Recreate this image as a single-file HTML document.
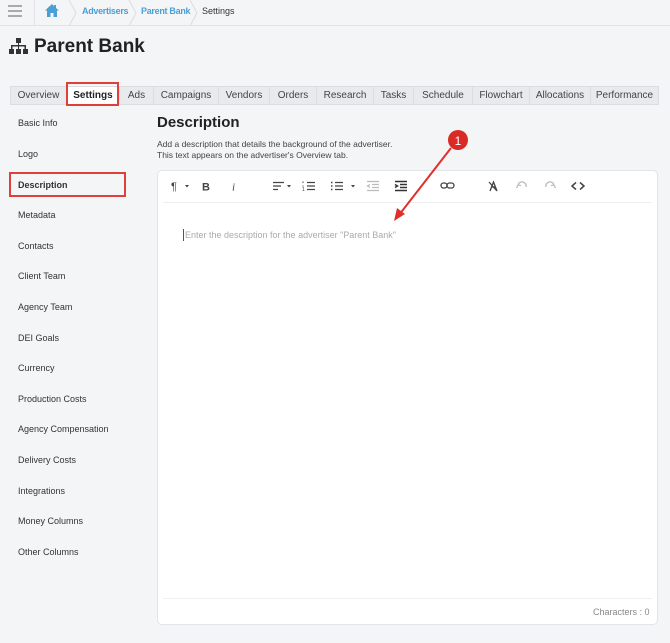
<!DOCTYPE html>
<html><head><meta charset="utf-8"><style>
*{box-sizing:border-box;margin:0;padding:0}
body{width:670px;height:643px;background:#f4f5f7;font-family:"Liberation Sans",Arial,sans-serif;color:#333;position:relative;overflow:hidden;font-size:9px}
.abs{position:absolute}
.top{left:0;top:0;width:670px;height:26px;background:#f4f5f7;border-bottom:1px solid #e2e3e6}
.bc{top:6px;font-size:9px}
.tabs{left:10px;top:86px;height:19px;display:flex}
.tab{height:19px;border:1px solid #dcdde0;border-right:none;background:#e9eaed;font-size:10px;color:#444;display:flex;align-items:center;justify-content:center}
.side div{position:absolute;left:18px;font-size:9px;color:#333}
.ic{position:absolute;top:179px}
</style></head><body>
<div class="abs top"></div>
<div class="abs" style="left:8px;top:5px;width:14px">
<div style="height:1.5px;background:#aaa;margin-bottom:3.5px"></div><div style="height:1.5px;background:#aaa;margin-bottom:3.5px"></div><div style="height:1.5px;background:#aaa"></div></div>
<div class="abs" style="left:34px;top:0;width:1px;height:26px;background:#e2e3e6"></div>
<svg class="abs" style="left:44px;top:3px" width="16" height="15" viewBox="0 0 16 15"><path d="M8 1L1 7.5h2V14h3.5V10h3v4H13V7.5h2L12 5V2h-2v1.2z" fill="#4a9fd5"/></svg>
<svg class="abs" style="left:68px;top:0" width="10" height="26"><path d="M1 0L8 13L1 26" stroke="#ddd" fill="none"/></svg>
<div class="abs bc" style="left:82px;color:#4a9fd5;font-weight:bold;letter-spacing:-0.3px">Advertisers</div>
<svg class="abs" style="left:128px;top:0" width="10" height="26"><path d="M1 0L8 13L1 26" stroke="#ddd" fill="none"/></svg>
<div class="abs bc" style="left:141px;color:#4a9fd5;font-weight:bold;letter-spacing:-0.3px">Parent Bank</div>
<svg class="abs" style="left:189px;top:0" width="10" height="26"><path d="M1 0L8 13L1 26" stroke="#ddd" fill="none"/></svg>
<div class="abs bc" style="left:202px;color:#333">Settings</div>
<svg class="abs" style="left:9px;top:38px" width="19" height="16" viewBox="0 0 19 16"><g fill="#333"><rect x="7" y="0" width="5" height="5"/><rect x="9" y="5" width="1" height="3"/><rect x="2" y="7" width="15" height="1.5"/><rect x="2" y="7" width="1.5" height="4"/><rect x="15.5" y="7" width="1.5" height="4"/><rect x="9" y="7" width="1" height="4"/><rect x="0" y="11" width="5" height="5"/><rect x="7" y="11" width="5" height="5"/><rect x="14" y="11" width="5" height="5"/></g></svg>
<div class="abs" style="left:34px;top:36px;font-size:19px;font-weight:bold;color:#222">Parent Bank</div>
<div class="abs tabs">
<div class="tab" style="width:56px">Overview</div>
<div class="tab" style="width:53px;background:#fff;font-weight:bold;color:#222">Settings</div>
<div class="tab" style="width:34px">Ads</div>
<div class="tab" style="width:65px">Campaigns</div>
<div class="tab" style="width:51px">Vendors</div>
<div class="tab" style="width:47px">Orders</div>
<div class="tab" style="width:57px">Research</div>
<div class="tab" style="width:40px">Tasks</div>
<div class="tab" style="width:59px">Schedule</div>
<div class="tab" style="width:57px">Flowchart</div>
<div class="tab" style="width:61px">Allocations</div>
<div class="tab" style="width:69px;border-right:1px solid #dcdde0">Performance</div>
</div>
<div class="abs" style="left:66px;top:82px;width:53px;height:24px;border:2px solid #e0403a"></div>
<div class="side">
<div style="top:118px">Basic Info</div><div style="top:149px">Logo</div>
<div style="top:180px;font-weight:bold">Description</div>
<div style="top:210px">Metadata</div><div style="top:241px">Contacts</div><div style="top:271px">Client Team</div>
<div style="top:302px">Agency Team</div><div style="top:333px">DEI Goals</div><div style="top:363px">Currency</div>
<div style="top:394px">Production Costs</div><div style="top:424px">Agency Compensation</div><div style="top:455px">Delivery Costs</div>
<div style="top:486px">Integrations</div><div style="top:516px">Money Columns</div><div style="top:547px">Other Columns</div>
</div>
<div class="abs" style="left:9px;top:172px;width:117px;height:25px;border:2px solid #e0403a"></div>
<div class="abs" style="left:157px;top:114px;font-size:15px;font-weight:bold;color:#222">Description</div>
<div class="abs" style="left:157px;top:139px;font-size:8.5px;line-height:11px;color:#444">Add a description that details the background of the advertiser.<br>This text appears on the advertiser's Overview tab.</div>
<div class="abs" style="left:157px;top:170px;width:501px;height:455px;background:#fff;border:1px solid #e3e4e7;border-radius:5px"></div>
<div class="abs" style="left:163px;top:202px;width:489px;height:1px;background:#eee"></div>
<div class="abs" style="left:163px;top:598px;width:489px;height:1px;background:#f0f0f0"></div>
<svg class="abs" style="left:165px;top:178px" width="425" height="16" viewBox="165 178 425 16" fill="none" stroke="#444" stroke-width="1.3">
<text x="171" y="190" font-size="11" fill="#444" stroke="none" font-family="Liberation Sans">¶</text><path d="M185 185h4l-2 2.5z" fill="#444" stroke="none"/>
<text x="202" y="190.5" font-size="11" font-weight="bold" fill="#444" stroke="none" font-family="Liberation Sans">B</text>
<text x="232" y="190.5" font-size="11" font-style="italic" fill="#444" stroke="none" font-family="Liberation Serif">i</text>
<path d="M273 182.5h11M273 186h8M273 189.5h5"/><path d="M287 185h4l-2 2.5z" fill="#444" stroke="none"/>
<path d="M307 182.5h8M307 186h8M307 189.5h8"/><text x="302" y="191" font-size="5" fill="#444" stroke="none">1</text><path d="M303 183v-1.5M303 186.5v-1" stroke-width="1"/>
<path d="M335 182.5h8M335 186h8M335 189.5h8"/><path d="M331 182.5h1.5M331 186h1.5M331 189.5h1.5" stroke-width="1.6"/><path d="M351 185h4l-2 2.5z" fill="#444" stroke="none"/>
<path d="M367 181.5h12M372 184.5h7M372 187.5h7M367 190.5h12M370 184.5l-2.5 1.5 2.5 1.5" stroke="#bbb"/>
<path d="M395 181.5h12M400 184.5h7M400 187.5h7M395 190.5h12M395 184.5l2.5 1.5-2.5 1.5" stroke="#333" stroke-width="1.5"/>
<rect x="441" y="183" width="6" height="5" rx="2.5"/><rect x="447" y="183" width="7" height="5" rx="2.5"/>
<path d="M490 191l3.5-9 3.5 9M491.5 187h4M489 182l8 9"/>
<path d="M518 185a4 4 0 0 1 8 2M518 185l-1.5 3M518 185l3 0.5" stroke="#bbb"/>
<path d="M554 185a4 4 0 0 0 -8 2M554 185l1.5 3M554 185l-3 0.5" stroke="#bbb"/>
<path d="M576 182.5l-4 3.5 4 3.5M580 182.5l4 3.5-4 3.5" stroke-width="1.5"/>
</svg>
<div class="abs" style="left:183px;top:229px;width:1px;height:12px;background:#555"></div>
<div class="abs" style="left:185px;top:230px;font-size:9px;color:#aaa">Enter the description for the advertiser "Parent Bank"</div>
<div class="abs" style="left:593px;top:607px;font-size:9px;color:#888">Characters : 0</div>
<svg class="abs" style="left:380px;top:128px" width="95" height="100"><path d="M71 20L19 87" stroke="#e0302a" stroke-width="2"/><path d="M14 93L17 80L25 86z" fill="#e0302a"/><circle cx="78" cy="12" r="10" fill="#d92a25"/><text x="78" y="17" font-size="12" fill="#fff" text-anchor="middle" font-family="Liberation Sans">1</text></svg>
</body></html>
